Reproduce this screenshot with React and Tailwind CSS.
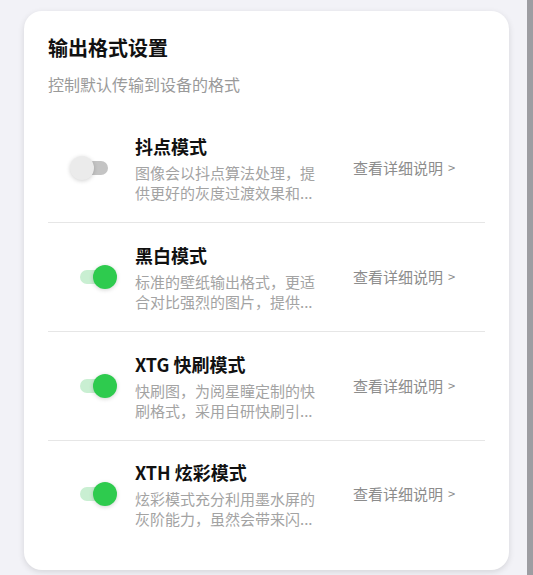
import React, { useState } from "react";

const modes = [
  {
    key: "dither",
    title: "抖点模式",
    desc: "图像会以抖点算法处理，提供更好的灰度过渡效果和...",
    on: false,
  },
  {
    key: "bw",
    title: "黑白模式",
    desc: "标准的壁纸输出格式，更适合对比强烈的图片，提供...",
    on: true,
  },
  {
    key: "xtg",
    title: "XTG 快刷模式",
    desc: "快刷图，为阅星瞳定制的快刷格式，采用自研快刷引...",
    on: true,
  },
  {
    key: "xth",
    title: "XTH 炫彩模式",
    desc: "炫彩模式充分利用墨水屏的灰阶能力，虽然会带来闪...",
    on: true,
  },
];

const Toggle = ({ on, onClick }) => (
  <button onClick={onClick} className="relative w-[28px] h-[14px] rounded-full">
    <span
      className={`absolute inset-0 rounded-full ${on ? "bg-[#c9efd2]" : "bg-[#c4c4c4]"}`}
    />
    <span
      className={`absolute top-[-5px] w-[24px] h-[24px] rounded-full shadow-[0_1px_4px_rgba(0,0,0,0.18)] ${
        on ? "right-[-9px] bg-[#2ecb4e]" : "left-[-10px] bg-[#ebebeb]"
      }`}
    />
  </button>
);

export default function App() {
  const [state, setState] = useState(() => modes.map((m) => m.on));

  return (
    <div
      className="flex w-full h-[575px] bg-[#f2f2f7] overflow-hidden"
      style={{ fontFamily: '"Noto Sans CJK SC", "Noto Sans", sans-serif' }}
    >
      <div className="w-[527px] pl-[24px] pt-[11px]">
        <div className="w-[485px] bg-white rounded-[18px] shadow-[0_2px_6px_rgba(0,0,0,0.12)] px-6 pt-[23px] pb-[23px]">
          <h2 className="text-[20px] leading-[28px] font-bold text-[#111]">输出格式设置</h2>
          <p className="mt-[10px] text-[16px] leading-[24px] text-[#9a9a9a]">控制默认传输到设备的格式</p>

          <div className="mt-[18px]">
            {modes.map((m, i) => (
              <div
                key={m.key}
                className={`flex items-center ${
                  i < modes.length - 1 ? "h-[109px] border-b border-[#e6e6e6]" : "h-[106px]"
                }`}
              >
                <div className="w-[87px] pl-[32px] flex items-center">
                  <Toggle
                    on={state[i]}
                    onClick={() => setState((s) => s.map((v, j) => (j === i ? !v : v)))}
                  />
                </div>
                <div className="w-[190px]">
                  <div className="text-[18px] leading-[26px] font-bold text-[#111]">{m.title}</div>
                  <p className="mt-[4px] text-[15px] leading-[20px] text-[#a3a3a3]">{m.desc}</p>
                </div>
                <button className="ml-[28px] flex items-center gap-[5px] text-[15px] leading-[20px] text-[#8c8c8c]">
                  查看详细说明
                  <span className="text-[13px]">&gt;</span>
                </button>
              </div>
            ))}
          </div>
        </div>
      </div>
      <div className="w-[6px] h-full bg-[#9d9da2]" />
    </div>
  );
}
